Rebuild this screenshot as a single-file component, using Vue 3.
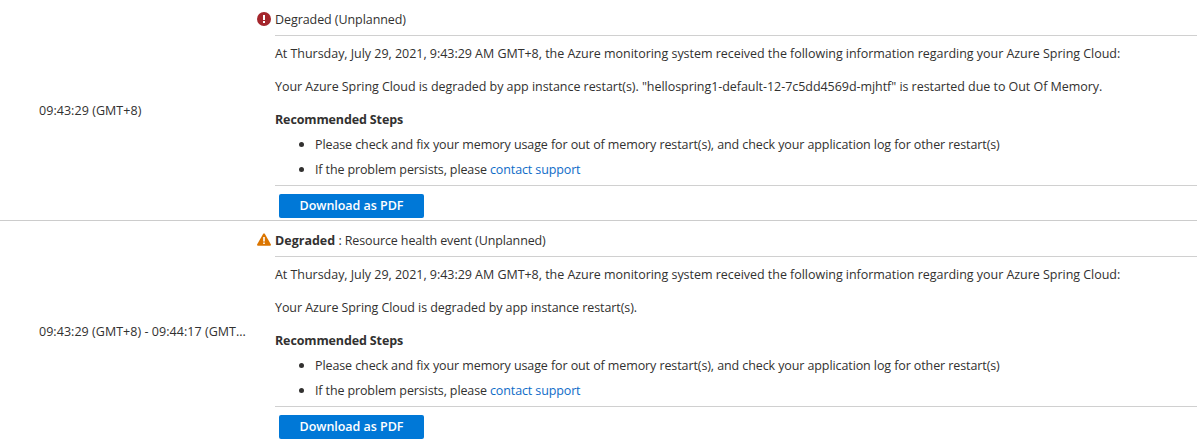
<script setup>
const received = 'At Thursday, July 29, 2021, 9:43:29 AM GMT+8, the Azure monitoring system received the following information regarding your Azure Spring Cloud:'

const events = [
  {
    time: '09:43:29 (GMT+8)',
    timeClass: 'short',
    icon: 'error',
    title: 'Degraded (Unplanned)',
    detail: 'Your Azure Spring Cloud is degraded by app instance restart(s). "hellospring1-default-12-7c5dd4569d-mjhtf" is restarted due to Out Of Memory.',
    detailClass: 'long',
  },
  {
    time: '09:43:29 (GMT+8) - 09:44:17 (GMT...',
    timeClass: 'range',
    icon: 'warning',
    status: 'Degraded',
    title: ': Resource health event (Unplanned)',
    detail: 'Your Azure Spring Cloud is degraded by app instance restart(s).',
    detailClass: 'brief',
  },
]
</script>

<template>
  <main class="history">
    <section v-for="event in events" :key="event.icon" class="event">
      <div class="time" :class="event.timeClass">{{ event.time }}</div>
      <div class="marker">
        <svg v-if="event.icon === 'error'" width="14" height="14" viewBox="0 0 14 14">
          <circle cx="7" cy="7" r="7" fill="#a4262c" />
          <path d="M6 3h2v5H6zM6 9h2v2H6z" fill="#fff" />
        </svg>
        <svg v-else width="14" height="14" viewBox="0 0 14 14">
          <path d="M6.1 .9Q7-.5 7.9 .9L13.8 11.3Q14.3 12.7 13 12.7H1Q-.3 12.7 .2 11.3Z" fill="#db7500" />
          <path d="M6.2 4h1.6v4.5H6.2zM6.2 9.5h1.6v1.6H6.2z" fill="#fff" />
        </svg>
      </div>
      <div class="body">
        <header class="title" :class="{ resource: event.status }">
          <b v-if="event.status">{{ event.status }}</b><span>{{ event.title }}</span>
        </header>
        <p class="received">{{ received }}</p>
        <p :class="event.detailClass">{{ event.detail }}</p>
        <h3>Recommended Steps</h3>
        <ul>
          <li>Please check and fix your memory usage for out of memory restart(s), and check your application log for other restart(s)</li>
          <li><span class="lead">If the problem persists, please </span><a>contact support</a></li>
        </ul>
        <footer><button type="button">Download as PDF</button></footer>
      </div>
    </section>
  </main>
</template>

<style>
body { margin: 0; background: #fff; overflow: hidden; }
</style>

<style scoped>
.history {
  height: 440px;
  overflow: hidden;
  color: #323130;
  font: 12.5px/18px "Open Sans", "Noto Sans", sans-serif;
  white-space: nowrap;
}
.event {
  display: grid;
  grid-template-columns: 257px 18px 1fr;
  height: 220px;
  border-bottom: 1px solid #ccc;
}
.time { align-self: center; padding: 2px 0 0 39px; }
.short { letter-spacing: 0.05px; }
.range { letter-spacing: 0.04px; }
.marker { padding-top: 12px; }
.marker svg { display: block; }
.title {
  box-sizing: border-box;
  display: flex;
  height: 36px;
  padding-top: 11px;
  border-bottom: 1px solid #d0d0d0;
  letter-spacing: -0.07px;
}
.title b { width: 63.4px; font-weight: 700; letter-spacing: 0; }
.resource span { letter-spacing: -0.12px; }
p { margin: 0; height: 18px; padding-top: 15px; }
.received { padding-top: 9px; letter-spacing: -0.034px; }
.long { letter-spacing: -0.048px; }
.brief { letter-spacing: -0.075px; }
h3 {
  margin: 15px 0 0;
  font-size: 12.5px;
  line-height: 18px;
  font-weight: 700;
  letter-spacing: -0.13px;
}
ul { margin: 3px 0 0; padding: 0; list-style: none; }
li {
  display: flex;
  align-items: center;
  height: 25px;
  letter-spacing: -0.097px;
}
li::before {
  content: "";
  width: 5px;
  height: 5px;
  margin: 0 11px 0 24px;
  border-radius: 50%;
  background: #323130;
}
.lead { white-space: pre; letter-spacing: -0.125px; }
a { color: #0f6cc8; letter-spacing: -0.12px; }
footer { padding: 8px 0 0 4px; margin-top: 3px; border-top: 1px solid #d0d0d0; }
button {
  display: block;
  width: 145px;
  height: 24px;
  padding: 0;
  border: 0;
  border-radius: 2px;
  background: #0078d7;
  color: #fff;
  font: 600 12.5px/24px "Open Sans", "Noto Sans", sans-serif;
  letter-spacing: -0.03px;
}
</style>
